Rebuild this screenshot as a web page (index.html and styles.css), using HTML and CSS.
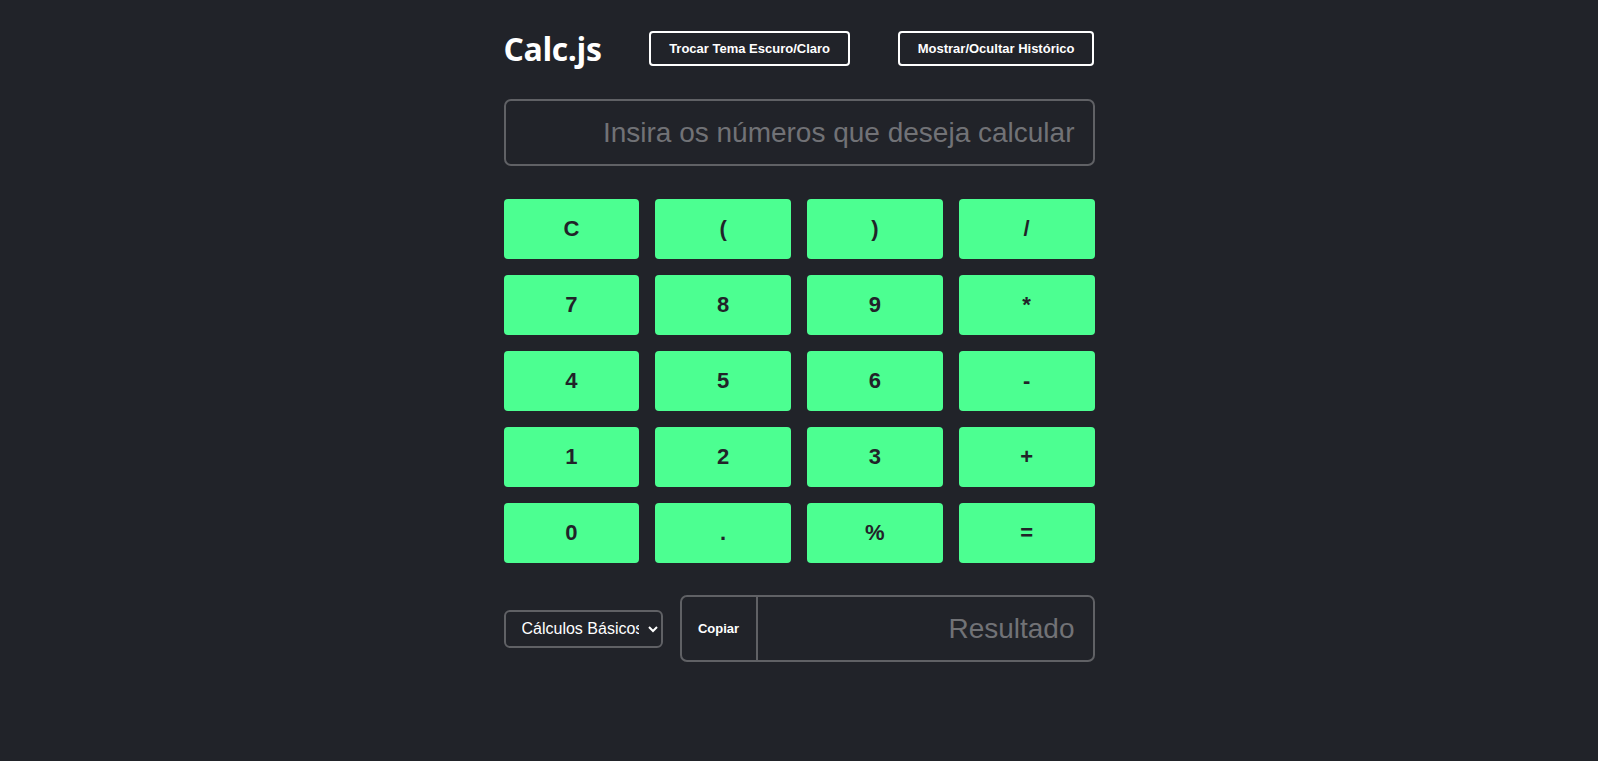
FILE: index.html
```html
<!DOCTYPE html>
<html lang="pt-BR">
<head>
<meta charset="utf-8">
<title>Calc.js</title>
<link rel="stylesheet" href="styles.css">
</head>
<body>
<main class="app">
  <header class="top">
    <h1 class="logo">Calc.js</h1>
    <button class="outline-btn">Trocar Tema Escuro/Claro</button>
    <button class="outline-btn">Mostrar/Ocultar Histórico</button>
  </header>
  <input class="display" type="text" placeholder="Insira os números que deseja calcular">
  <section class="keys">
    <button class="key">C</button>
    <button class="key">(</button>
    <button class="key">)</button>
    <button class="key">/</button>
    <button class="key">7</button>
    <button class="key">8</button>
    <button class="key">9</button>
    <button class="key">*</button>
    <button class="key">4</button>
    <button class="key">5</button>
    <button class="key">6</button>
    <button class="key">-</button>
    <button class="key">1</button>
    <button class="key">2</button>
    <button class="key">3</button>
    <button class="key">+</button>
    <button class="key">0</button>
    <button class="key">.</button>
    <button class="key">%</button>
    <button class="key">=</button>
  </section>
  <footer class="bottom">
    <select class="mode">
      <option>Cálculos Básicos</option>
    </select>
    <div class="result">
      <button class="copy">Copiar</button>
      <input class="result-input" type="text" placeholder="Resultado" readonly>
    </div>
  </footer>
</main>
</body>
</html>
```

FILE: styles.css
```css
* { box-sizing: border-box; }
html, body {
  margin: 0;
  background: #212329;
  color: #ffffff;
  font-family: "Liberation Sans", Arial, sans-serif;
}
.app {
  width: 591px;
  margin: 0 auto;
  padding-top: 31px;
}
.top {
  display: flex;
  align-items: center;
  justify-content: space-between;
  height: 35px;
}
.logo {
  margin: 0;
  font-family: "Open Sans", "DejaVu Sans", sans-serif;
  font-weight: 700;
  font-size: 32px;
  letter-spacing: -0.4px;
  line-height: 35px;
  color: #ffffff;
}
.outline-btn {
  height: 35px;
  padding: 0 18px;
  background: transparent;
  color: #ffffff;
  border: 2px solid #ffffff;
  border-radius: 4px;
  font-family: "Liberation Sans", Arial, sans-serif;
  font-weight: 700;
  font-size: 13px;
}
.display {
  display: block;
  width: 100%;
  height: 67px;
  margin-top: 33px;
  padding: 0 18px;
  background: transparent;
  border: 2px solid #606165;
  border-radius: 7px;
  color: #ffffff;
  text-align: right;
  font-family: "Liberation Sans", Arial, sans-serif;
  font-size: 28px;
  outline: none;
}
.display::placeholder, .result-input::placeholder {
  color: #717276;
}
.keys {
  display: grid;
  grid-template-columns: repeat(4, 1fr);
  grid-auto-rows: 60px;
  gap: 16px;
  margin-top: 33px;
}
.key {
  border: none;
  border-radius: 4px;
  background: #4cff91;
  color: #212329;
  font-family: "Liberation Sans", Arial, sans-serif;
  font-weight: 700;
  font-size: 22px;
}
.bottom {
  display: flex;
  align-items: center;
  gap: 17px;
  margin-top: 32px;
}
.mode {
  width: 159px;
  height: 38px;
  padding: 0 6px 0 12px;
  background: #212329;
  color: #ffffff;
  border: 2px solid #606165;
  border-radius: 6px;
  font-family: "Liberation Sans", Arial, sans-serif;
  font-size: 16px;
}
.result {
  flex: 1;
  display: flex;
  height: 67px;
  border: 2px solid #606165;
  border-radius: 7px;
  overflow: hidden;
}
.copy {
  width: 76px;
  padding: 0;
  background: transparent;
  color: #ffffff;
  border: none;
  border-right: 2px solid #606165;
  font-family: "Liberation Sans", Arial, sans-serif;
  font-weight: 700;
  font-size: 13px;
}
.result-input {
  flex: 1;
  min-width: 0;
  padding: 0 18px;
  background: transparent;
  border: none;
  color: #ffffff;
  text-align: right;
  font-family: "Liberation Sans", Arial, sans-serif;
  font-size: 28px;
  outline: none;
}
```
